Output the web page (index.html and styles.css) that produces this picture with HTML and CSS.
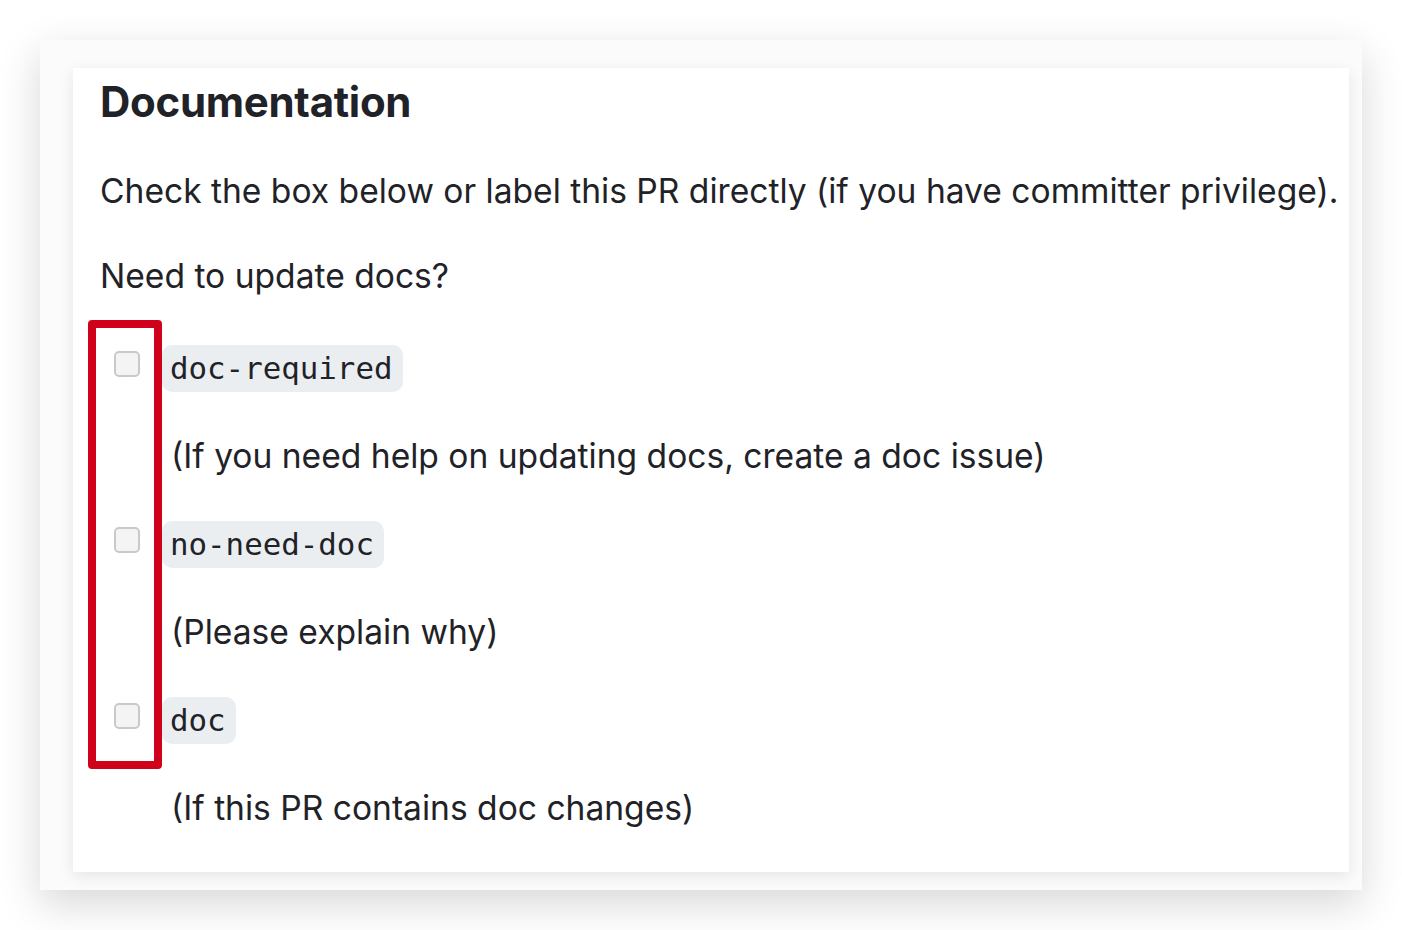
FILE: index.html
```html
<!DOCTYPE html>
<html lang="en">
<head>
<meta charset="utf-8">
<title>Documentation</title>
<link rel="stylesheet" href="styles.css">
</head>
<body>
<div class="frame">
  <div class="card">
    <h3 class="title">Documentation</h3>
    <p class="para">Check the box below or label this PR directly (if you have committer privilege).</p>
    <p class="para">Need to update docs?</p>
    <ul class="tasks">
      <li class="task">
        <div class="task-row"><span class="box"></span><code class="badge">doc-required</code></div>
        <p class="desc">(If you need help on updating docs, create a doc issue)</p>
      </li>
      <li class="task">
        <div class="task-row"><span class="box"></span><code class="badge">no-need-doc</code></div>
        <p class="desc">(Please explain why)</p>
      </li>
      <li class="task">
        <div class="task-row"><span class="box"></span><code class="badge">doc</code></div>
        <p class="desc">(If this PR contains doc changes)</p>
      </li>
    </ul>
    <div class="highlight"></div>
  </div>
</div>
</body>
</html>
```
FILE: styles.css
```css
html, body {
  margin: 0;
  padding: 0;
  background: #ffffff;
}
body {
  width: 1402px;
  height: 930px;
  overflow: hidden;
  padding: 40px;
  box-sizing: border-box;
  font-family: Inter, "Liberation Sans", sans-serif;
  color: #1f2328;
}
.frame {
  width: 1322px;
  height: 850px;
  box-sizing: border-box;
  padding: 28px 13px 18px 33px;
  background: #fbfbfb;
  box-shadow: 0 14px 40px rgba(0, 0, 0, 0.16);
}
.card {
  position: relative;
  height: 100%;
  box-sizing: border-box;
  background: #ffffff;
  padding: 7px 0 0 27px;
  box-shadow: 0 4px 14px rgba(0, 0, 0, 0.09);
}
.title {
  margin: 0 0 36px;
  font-size: 42px;
  line-height: 54px;
  font-weight: 700;
  letter-spacing: -0.3px;
}
.para {
  margin: 0 0 34px;
  font-size: 33.6px;
  line-height: 51px;
  white-space: nowrap;
}
.tasks {
  list-style: none;
  margin: 44px 0 0;
  padding: 0;
}
.task-row {
  display: flex;
  align-items: flex-start;
  height: 47px;
}
.box {
  width: 26px;
  height: 26px;
  box-sizing: border-box;
  margin: 6px 22px 0 14px;
  border: 2px solid #c9c9c9;
  border-radius: 5px;
  background: #f4f4f4;
}
.badge {
  font-family: "DejaVu Sans Mono", "Liberation Mono", monospace;
  font-size: 30.8px;
  line-height: 47px;
  height: 47px;
  padding: 0 10px 0 8px;
  border-radius: 10px;
  background: #eaeef1;
  color: #1f2328;
}
.desc {
  margin: 38px 0 40px 71px;
  font-size: 33.6px;
  line-height: 51px;
}
.highlight {
  position: absolute;
  left: 15px;
  top: 252px;
  width: 74px;
  height: 449px;
  box-sizing: border-box;
  border: 8px solid #d0011b;
  border-radius: 4px;
}
```
